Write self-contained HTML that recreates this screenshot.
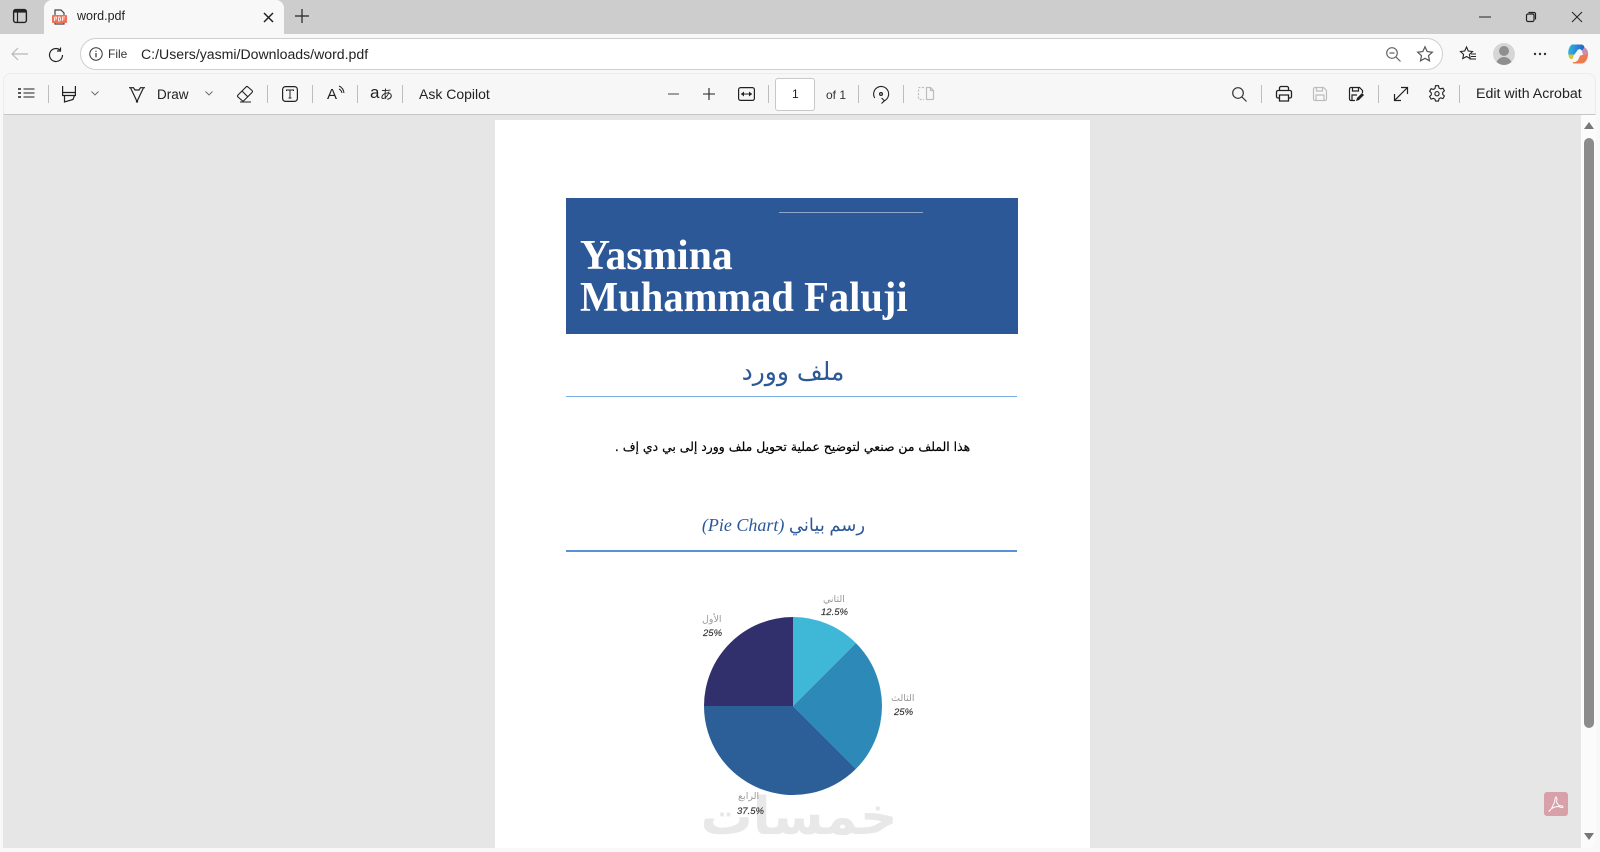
<!DOCTYPE html>
<html lang="en"><head><meta charset="utf-8"><title>word.pdf</title>
<style>
*{box-sizing:border-box}
html,body{margin:0;padding:0;width:1600px;height:852px;overflow:hidden;background:#f8f8f8;font-family:"Liberation Sans",sans-serif;color:#222}
.a{position:absolute}
.t{position:absolute;white-space:nowrap;line-height:1}
svg{position:absolute;overflow:visible;fill:none;stroke:#222;stroke-width:1.2}
.sep{position:absolute;top:85px;width:1px;height:18px;background:#bdbdbd}
.ar{font-family:"DejaVu Sans",sans-serif;direction:rtl}
.pct{font-family:"Liberation Sans",sans-serif;font-style:italic;font-size:9.5px;color:#333;-webkit-text-stroke:.15px #333}
.lab{font-family:"DejaVu Sans",sans-serif;font-size:9.5px;color:#999;direction:rtl}
</style></head><body>
<div class="a" style="left:0;top:0;width:1600px;height:34px;background:#cdcdcd"></div>
<div class="a" style="left:44px;top:0;width:240px;height:35px;background:#f8f8f8;border-radius:8px 8px 0 0"></div>
<svg style="left:13px;top:9px" width="14" height="14" viewBox="0 0 14 14"><rect x=".6" y=".6" width="12.8" height="12.8" rx="2" stroke-width="1.4"/><rect x="1" y="1" width="12" height="2.6" fill="#222" stroke="none"/><path d="M4.5 3v10"/></svg>
<svg style="left:52px;top:9px" width="15" height="16" viewBox="0 0 15 16"><path d="M3 6V1h6l3 3v2M3 13v2h9v-2" stroke="#444"/><rect x="0" y="6" width="15" height="8" rx="1" fill="#f0705a" stroke="none"/><path d="M2.5 8v4M2.5 8h2v2h-2M6.5 8v4h1.5l.5-2-.5-2zM10.5 12V8h2.500M10.500 10h2" stroke="#fff" stroke-width=".8"/></svg>
<div class="t" style="left:77px;top:10px;font-size:12.500px;color:#222">word.pdf</div>
<svg style="left:263px;top:12px" width="11" height="11" viewBox="0 0 11 11"><path d="M1 1l9 9M10 1l-9 9" stroke-width="1.500"/></svg>
<svg style="left:295px;top:9px" width="14" height="14" viewBox="0 0 14 14"><path d="M7 0v14M0 7h14"/></svg>
<svg style="left:1479px;top:16px" width="12" height="2" viewBox="0 0 12 2"><path d="M0 1h12" stroke-width="1"/></svg>
<svg style="left:1526px;top:12px" width="10" height="10" viewBox="0 0 10 10"><rect x=".5" y="2" width="7.500" height="7.500" rx="1.500"/><path d="M2.500 .5H8a1.500 1.500 0 0 1 1.500 1.500v5.500"/></svg>
<svg style="left:1572px;top:12px" width="10" height="10" viewBox="0 0 10 10"><path d="M0 0l10 10M10 0L0 10" stroke-width="1"/></svg>
<svg style="left:11px;top:47px" width="18" height="14" viewBox="0 0 18 14"><path d="M17 7H1M7 1L1 7l6 6" stroke="#b8b8b8" stroke-width="1.200"/></svg>
<svg style="left:48px;top:47px" width="16" height="16" viewBox="0 0 16 16"><path d="M14.500 8A6.500 6.500 0 1 1 12 2.900M12.500 .5v3.500H9" stroke-width="1.200"/></svg>
<div class="a" style="left:80px;top:38px;width:1363px;height:32px;background:#fff;border:1px solid #cfcfcf;border-radius:16px"></div>
<svg style="left:89px;top:47px" width="14" height="14" viewBox="0 0 14 14"><circle cx="7" cy="7" r="6.200" stroke="#333" stroke-width="1"/><path d="M7 6v4.200M7 3.600v1.200" stroke="#333" stroke-width="1.200"/></svg>
<div class="t" style="left:108px;top:48px;font-size:12px;color:#333">File</div>
<div class="t" style="left:141px;top:47px;font-size:14.100px;color:#222">C:/Users/yasmi/Downloads/word.pdf</div>
<svg style="left:1386px;top:47px" width="15" height="15" viewBox="0 0 15 15"><circle cx="6" cy="6" r="5.300" stroke="#666"/><path d="M3.500 6h5M10 10l4.500 4.500" stroke="#666"/></svg>
<svg style="left:1417px;top:46px" width="16" height="16" viewBox="0 0 16 16"><path d="M8 .8l2.200 4.800 5.100.6-3.800 3.500 1 5.100L8 12.300l-4.500 2.500 1-5.100L.7 6.200l5.100-.6z" stroke="#555"/></svg>
<svg style="left:1460px;top:46px" width="16" height="16" viewBox="0 0 16 16"><path d="M6.500 1l1.800 4 4.200.5-3.100 2.900.8 4.200-3.700-2.100L2.800 12.600l.8-4.200L.5 5.500 4.700 5z" stroke-width="1.100"/><path d="M11 8h5M11 10.500h5M9.500 13h6.500" stroke-width="1"/></svg>
<div class="a" style="left:1493px;top:43px;width:22px;height:22px;border-radius:50%;background:#d6d6d6;overflow:hidden">
  <div class="a" style="left:6px;top:3px;width:10px;height:10px;border-radius:50%;background:#8f8f8f"></div>
  <div class="a" style="left:3px;top:14px;width:16px;height:12px;border-radius:8px 8px 0 0;background:#8f8f8f"></div>
</div>
<svg style="left:1533px;top:52px" width="14" height="4" viewBox="0 0 14 4"><g fill="#333" stroke="none"><circle cx="2" cy="2" r="1.200"/><circle cx="7" cy="2" r="1.200"/><circle cx="12" cy="2" r="1.200"/></g></svg>
<svg style="left:1567px;top:43px" width="22" height="22" viewBox="0 0 22 22"><defs><linearGradient id="g1" x1="0" y1="0" x2="1" y2="0"><stop offset="0" stop-color="#2fb6e0"/><stop offset="1" stop-color="#2a5fc4"/></linearGradient></defs><path d="M5 1.500h9c2 0 3 1 3.500 3L15 8c-1-2.500-4-2.500-5 0L7 12H1.500C.5 9 2 3 5 1.500z" fill="url(#g1)" stroke="none"/><path d="M1.500 11.500H7l-1 3.500c-.5 1-1.500 1.500-2.500 1C2 15 1.500 13.500 1.500 11.500z" fill="#d7c43a" stroke="none"/><path d="M15 8l2.500-3.500c2.500 1 4 4 3.500 7l-5 .5z" fill="#c98fb0" stroke="none"/><path d="M21 11c0 4-2 9-6 9.500H7c-1 0-1.500-1-1.300-1.500 3 .5 5.300-1 6.300-4l1-2.500z" fill="#f07a4e" stroke="none"/></svg>

<div class="a" style="left:3px;top:73px;width:1593px;height:42px;background:#f7f7f7;border:1px solid #ececec;border-bottom:1px solid #c6c6c6;border-radius:8px 8px 0 0"></div>
<svg style="left:18px;top:88px" width="17" height="10" viewBox="0 0 17 10"><path d="M5.500 1h11M5.500 5h11M5.500 9h11" stroke-width="1"/><path d="M0 1h3M0 5h3M0 9h3" stroke-width="1.500"/></svg>
<div class="sep" style="left:48px"></div>
<svg style="left:62px;top:86px" width="14" height="16" viewBox="0 0 14 16"><path d="M.6 0v6.500h12.800V0M.6 6.500v3h12.800v-3M2.500 9.500V16l8.500-2.500 1.500-4" stroke-width="1.200"/></svg>
<svg style="left:91px;top:91px" width="8" height="5" viewBox="0 0 8 5"><path d="M.5.500L4 4l3.500-3.500" stroke="#666" stroke-width=".9"/></svg>
<svg style="left:129px;top:87px" width="16" height="16" viewBox="0 0 16 16"><path d="M0 .7h4.500L6 3h4l1.500-2.300H16M1.500.7L8 14.500 14.500.7" stroke-width="1.200"/><circle cx="8" cy="14.500" r="1.200" fill="#222" stroke="none"/></svg>
<div class="t" style="left:157px;top:87.500px;font-size:13.500px;color:#222">Draw</div>
<svg style="left:205px;top:91px" width="8" height="5" viewBox="0 0 8 5"><path d="M.5.500L4 4l3.500-3.500" stroke="#666" stroke-width=".9"/></svg>
<svg style="left:237px;top:85px" width="17" height="18" viewBox="0 0 17 18"><path d="M1 10l8-8c.6-.6 1.400-.6 2 0l4 3.500c.6.6.6 1.400 0 2l-8 8c-.6.600-1.400.600-2 0L1 12c-.6-.6-.6-1.400 0-2zM5 6l6 6M3 17h11" stroke-width="1.100"/></svg>
<div class="sep" style="left:267px"></div>
<svg style="left:282px;top:86px" width="16" height="16" viewBox="0 0 16 16"><rect x=".6" y=".6" width="14.800" height="14.800" rx="3"/><path d="M4.500 5V4h7v1M8 4v8M6.500 12h3" stroke-width="1"/></svg>
<div class="sep" style="left:312px"></div>
<div class="t" style="left:327px;top:87px;font-size:15px;color:#222">A</div>
<svg style="left:338px;top:85px" width="7" height="9" viewBox="0 0 7 9"><path d="M1 1c2.500 1 4.500 3.500 5 7M1 4c1.500.6 2.500 2 3 4" stroke-width="1"/></svg>
<div class="sep" style="left:357px"></div>
<div class="t" style="left:370px;top:84px;font-size:17px;color:#222">a</div>
<div class="t" style="left:380px;top:87px;font-size:13px;color:#222;font-family:'Noto Sans CJK JP',sans-serif">あ</div>
<div class="sep" style="left:402px"></div>
<div class="t" style="left:419px;top:87px;font-size:14px;color:#222">Ask Copilot</div>
<svg style="left:668px;top:93px" width="11" height="2" viewBox="0 0 11 2"><path d="M0 1h11" stroke="#777" stroke-width="1.400"/></svg>
<svg style="left:703px;top:88px" width="12" height="12" viewBox="0 0 12 12"><path d="M6 0v12M0 6h12" stroke-width="1.100"/></svg>
<svg style="left:738px;top:87px" width="17" height="14" viewBox="0 0 17 14"><rect x=".6" y=".6" width="15.800" height="12.800" rx="2"/><path d="M3 7h11" stroke-width="1"/><path d="M6 4.500L3 7l3 2.500zM11 4.500L14 7l-3 2.500z" fill="#222" stroke="none"/></svg>
<div class="sep" style="left:768px"></div>
<div class="a" style="left:775px;top:78px;width:40px;height:33px;background:#fff;border:1px solid #c8c8c8;border-radius:3px"></div>
<div class="t" style="left:792px;top:88px;font-size:12px;color:#222">1</div>
<div class="t" style="left:826px;top:89px;font-size:12px;color:#333">of 1</div>
<div class="sep" style="left:858px"></div>
<svg style="left:873px;top:86px" width="16" height="18" viewBox="0 0 16 18"><path d="M1.800 12A7.500 7.500 0 1 1 11.500 14.700M8.500 17.500l3-2.800-3-2.700" stroke-width="1.100"/><circle cx="8" cy="8" r="1.400" stroke-width="1.200"/></svg>
<div class="sep" style="left:903px"></div>
<svg style="left:918px;top:87px" width="16" height="13" viewBox="0 0 16 13"><path d="M6 .5H1.500a1 1 0 0 0-1 1V11.500a1 1 0 0 0 1 1H6" stroke="#bdbdbd" stroke-dasharray="2 1.500"/><path d="M8.500 .5h4l3 3v8a1 1 0 0 1-1 1H8.500zM12.500 .5v3h3" stroke="#bdbdbd"/></svg>
<svg style="left:1232px;top:87px" width="15" height="15" viewBox="0 0 15 15"><circle cx="6" cy="6" r="5.300" stroke="#333"/><path d="M10 10l4.500 4.500" stroke="#333"/></svg>
<div class="sep" style="left:1261px"></div>
<svg style="left:1276px;top:86px" width="16" height="16" viewBox="0 0 16 16"><path d="M3.500 4.500V2a1.500 1.500 0 0 1 1.500-1.500h6A1.500 1.500 0 0 1 12.500 2v2.500M3.500 12H2A1.500 1.500 0 0 1 .5 10.500V6A1.500 1.500 0 0 1 2 4.500h12A1.500 1.500 0 0 1 15.500 6v4.500A1.500 1.500 0 0 1 14 12h-1.500M3.500 9h9v6h-9z" stroke-width="1.300"/></svg>
<svg style="left:1313px;top:87px" width="14" height="14" viewBox="0 0 14 14"><path d="M.5 2A1.500 1.500 0 0 1 2 .5h8.500l3 3V12a1.500 1.500 0 0 1-1.500 1.500H2A1.500 1.500 0 0 1 .5 12zM3.500.5v3.500h6V.5M3 13.500V8h8v5.500" stroke="#bdbdbd"/></svg>
<svg style="left:1349px;top:87px" width="15" height="14" viewBox="0 0 15 14"><path d="M6 13.500H2A1.500 1.500 0 0 1 .5 12V2A1.500 1.500 0 0 1 2 .5h8.500l3 3V6M3.500.5v3.500h6V.5M3 13V8h5" stroke-width="1.200"/><path d="M7 14l1-3 5-5 2 2-5 5z" fill="#222" stroke="none"/></svg>
<div class="sep" style="left:1378px"></div>
<svg style="left:1394px;top:87px" width="14" height="14" viewBox="0 0 14 14"><path d="M.5 13.500l13-13M7 .5h6.500V7M.5 7v6.500H7" stroke-width="1.200"/></svg>
<svg style="left:1429px;top:85px" width="16" height="17" viewBox="0 0 16 17"><path d="M6.500.7h3l.5 2.300 1.700.9 2.200-.7 1.500 2.600-1.700 1.600v2l1.700 1.600-1.500 2.600-2.200-.7-1.700.9-.5 2.300h-3L6 14.300l-1.700-.9-2.200.7L.6 11.500l1.700-1.600v-2L.6 6.300 2.100 3.700l2.200.7L6 3.500z" stroke-width="1.100"/><circle cx="8" cy="8.700" r="2.100" stroke-width="1.100"/></svg>
<div class="sep" style="left:1459px"></div>
<div class="t" style="left:1476px;top:87px;font-size:14.200px;color:#222">Edit with Acrobat</div>

<div class="a" style="left:3px;top:115px;width:1578px;height:733px;background:#e6e6e6"></div>
<div class="a" style="left:1581px;top:115px;width:15px;height:733px;background:#fbfbfb;border-radius:0 0 8px 0"></div>
<div class="a" style="left:1584px;top:138px;width:10px;height:590px;border-radius:5px;background:#8b8b8b"></div>
<svg style="left:1584px;top:122px" width="10" height="8" viewBox="0 0 10 8"><path d="M5 0l5 7H0z" fill="#777" stroke="none"/></svg>
<svg style="left:1584px;top:833px" width="10" height="8" viewBox="0 0 10 8"><path d="M0 0h10L5 7z" fill="#777" stroke="none"/></svg>

<div class="a" style="left:495px;top:120px;width:595px;height:728px;background:#fff;overflow:hidden"></div>
<div class="a" style="left:566px;top:198px;width:452px;height:136px;background:#2c5898"></div>
<div class="a" style="left:779px;top:211.500px;width:144px;height:1px;background:#8ea6cb"></div>
<div class="t" style="left:580px;top:235px;font:bold 42px/42px 'Liberation Serif',serif;color:#fff;transform:scaleX(.991);transform-origin:left">Yasmina</div>
<div class="t" style="left:580px;top:276.500px;font:bold 42px/42px 'Liberation Serif',serif;color:#fff;transform:scaleX(.965);transform-origin:left">Muhammad Faluji</div>
<div class="t ar" style="left:567px;width:452px;top:359px;text-align:center;font-size:25px;color:#2c5898">ملف وورد</div>
<div class="a" style="left:566px;top:396px;width:451px;height:1px;background:#7cb0e6"></div>
<div class="t ar" style="left:567px;width:451px;top:441px;text-align:center;font-size:12.400px;color:#000;-webkit-text-stroke:.2px #000">هذا الملف من صنعي لتوضيح عملية تحويل ملف وورد إلى بي دي إف .</div>
<div class="t" style="left:558px;width:451px;top:516px;text-align:center;font-size:18px;color:#2c5898;font-family:'Liberation Serif','DejaVu Sans',serif;direction:rtl">رسم بياني <i>(Pie Chart)</i></div>
<div class="a" style="left:566px;top:550px;width:451px;height:2px;background:#5a90d4"></div>

<div class="t ar" style="left:695px;top:791px;width:208px;text-align:center;font-size:52px;font-weight:bold;color:#e8e8e8;line-height:52px">خمسات</div>
<svg style="left:701.500px;top:615px" width="182" height="182" viewBox="-91 -91 182 182">
<g stroke="none">
<path d="M0 0V-89A89 89 0 0 1 62.930-62.930z" fill="#3fb8d8"/>
<path d="M0 0L62.930-62.930A89 89 0 0 1 62.930 62.930z" fill="#2d8ab8"/>
<path d="M0 0L62.930 62.930A89 89 0 0 1-89 0z" fill="#2c5f98"/>
<path d="M0 0H-89A89 89 0 0 1 0-89z" fill="#32306c"/>
</g></svg>
<div class="t lab" style="left:702px;top:615px">الأول</div>
<div class="t pct" style="left:703px;top:629px">25%</div>
<div class="t lab" style="left:823px;top:595px">الثاني</div>
<div class="t pct" style="left:821px;top:608px">12.5%</div>
<div class="t lab" style="left:891px;top:694px">الثالث</div>
<div class="t pct" style="left:894px;top:708px">25%</div>
<div class="t lab" style="left:738px;top:792px">الرابع</div>
<div class="t pct" style="left:737px;top:807px">37.5%</div>

<div class="a" style="left:1544px;top:792px;width:24px;height:24px;border-radius:3px;background:#d8a0a8"></div>
<svg style="left:1547px;top:795px" width="18" height="18" viewBox="0 0 18 18"><path d="M2 16c2-1 4-5 5.500-9C8 5 8 2 9 2s1 3 .5 5c1 2 2.500 4 4 3.800 1.500 0 2.500.5 2.500 1.200s-2 1-4-.5c-3 0-6 1-8 2.500C3 15.500 2 16.800 2 16z" stroke="#fff" stroke-width="1"/></svg>
</body></html>
